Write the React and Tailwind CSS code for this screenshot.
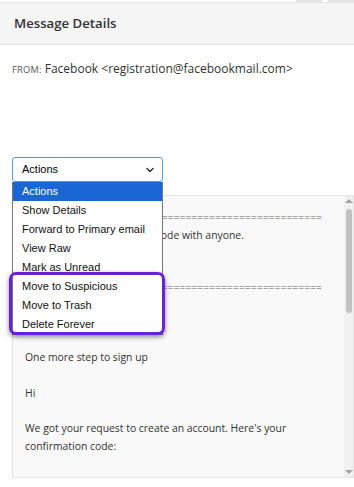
import { ChevronDown } from 'lucide-react';

const menuItems = [
    'Actions',
    'Show Details',
    'Forward to Primary email',
    'View Raw',
    'Mark as Unread',
    'Move to Suspicious',
    'Move to Trash',
    'Delete Forever',
];

const equals = '='.repeat(50);

export default function App() {
    return (
        <div className="relative w-[354px] h-[487px] overflow-hidden bg-white font-['Open_Sans',sans-serif] text-[#333]">
            {/* top tabs peeking in */}
            <div className="flex justify-end gap-[6px] h-[2px]">
                <div className="w-[26px] bg-[#e6e6e6]" />
                <div className="w-[26px] bg-[#e6e6e6]" />
            </div>

            {/* header */}
            <div className="h-[43px] flex items-center px-[14px] bg-[#f5f5f5] border-t border-b border-[#e4e4e4]">
                <h2 className="text-[13.2px] font-semibold text-[#333]">Message Details</h2>
            </div>

            {/* sender */}
            <div className="px-[12px] pt-[15px] flex items-baseline gap-[3px]">
                <span className="text-[9.3px] uppercase tracking-wide text-[#555]">From:</span>
                <span className="text-[12px] text-[#333]">Facebook &lt;registration@facebookmail.com&gt;</span>
            </div>

            {/* select */}
            <div className="relative ml-[12px] mt-[79px] w-[151px]">
                <div className="h-[25px] flex items-center justify-between pl-[9px] pr-[6px] bg-white border border-[#5b9ad6] rounded-[3px] font-['Liberation_Sans',Arial,sans-serif] text-[11px] text-black">
                    <span>Actions</span>
                    <ChevronDown size={12} strokeWidth={3} className="text-[#333]" />
                </div>

                {/* open dropdown list */}
                <div className="absolute left-0 top-[25px] z-10 w-[151px] bg-white border-x border-b border-[#767676] font-['Liberation_Sans',Arial,sans-serif] text-[11px] text-[#111]">
                    {menuItems.map((item, i) => (
                        <div
                            key={item}
                            className={`h-[19px] leading-[19px] pl-[9px] ${i === 0 ? 'bg-[#1a66d2] text-white' : ''}`}
                        >
                            {item}
                        </div>
                    ))}
                </div>

                {/* highlight box */}
                <div className="absolute left-[-3px] top-[115px] z-20 w-[156px] h-[63px] border-[3px] border-[#6a1fd9] rounded-[7px] shadow-[0_2px_5px_rgba(0,0,0,0.45)]" />
            </div>

            {/* message body */}
            <div className="ml-[12px] mt-[13px] h-[283px] flex bg-[#f9f9f9] border border-[#e3e3e3] overflow-hidden">
                <div className="flex-1 pl-[12px] pt-[12px] text-[10.4px] leading-[18px] text-[#333]">
                    <div className="text-[#666]">{equals}</div>
                    <div>For safety, don't share this code with anyone.</div>
                    <div className="mt-[34px] text-[#666]">{equals}</div>
                    <div className="mt-[52px]">One more step to sign up</div>
                    <div className="mt-[18px]">Hi</div>
                    <div className="mt-[17px]">We got your request to create an account. Here's your</div>
                    <div>confirmation code:</div>
                    <div className="mt-[18px]">Thanks</div>
                </div>

                {/* scrollbar */}
                <div className="w-[9px] flex flex-col items-center bg-[#f1f1f1]">
                    <div className="mt-[3px] w-0 h-0 border-x-[4px] border-x-transparent border-b-[4px] border-b-[#a3a3a3]" />
                    <div className="mt-[6px] w-[6px] h-[104px] rounded-full bg-[#c1c1c1]" />
                    <div className="flex-1" />
                    <div className="mb-[3px] w-0 h-0 border-x-[4px] border-x-transparent border-t-[4px] border-t-[#a3a3a3]" />
                </div>
            </div>
        </div>
    );
}
